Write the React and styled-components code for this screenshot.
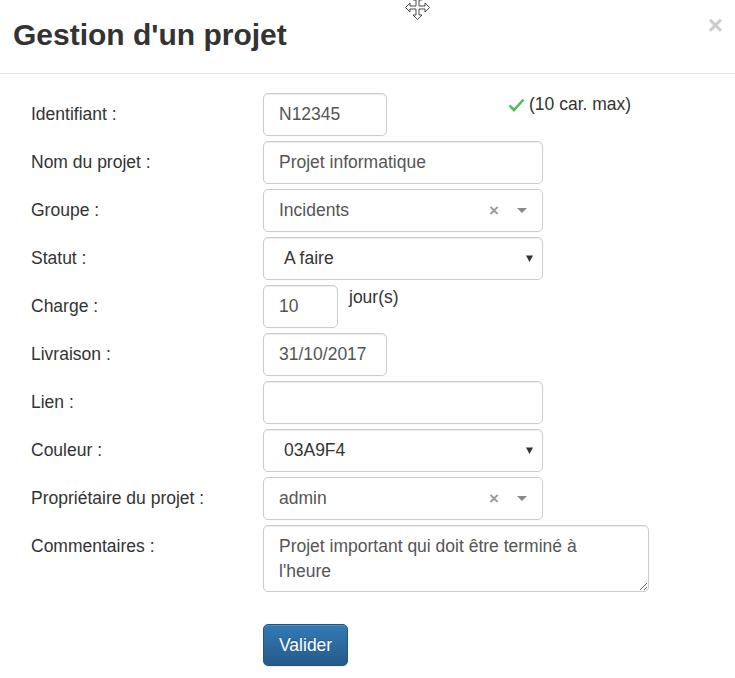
import styled, { createGlobalStyle } from "styled-components";

const GlobalStyle = createGlobalStyle`
  html, body {
    margin: 0;
    padding: 0;
    background: #fff;
    font-family: "Liberation Sans", Arial, Helvetica, sans-serif;
    color: #333;
  }
  * { box-sizing: border-box; }
`;

const Modal = styled.div`
  position: relative;
  width: 735px;
  min-height: 678px;
  background: #fff;
`;

const Header = styled.div`
  display: flex;
  align-items: flex-start;
  justify-content: space-between;
  padding: 18px 12px 22px 13px;
  border-bottom: 1px solid #e5e5e5;
`;

const Title = styled.h3`
  margin: 0;
  font-size: 30px;
  line-height: 33px;
  font-weight: 700;
  color: #333;
`;

const Close = styled.span`
  font-size: 26px;
  font-weight: 700;
  line-height: 1;
  color: #000;
  opacity: 0.2;
  margin-top: -6px;
  cursor: pointer;
`;

const Body = styled.div`
  padding: 19px 19px 19px 31px;
`;

const Row = styled.div`
  display: grid;
  grid-template-columns: 232px 1fr;
  align-items: start;
  margin-bottom: 5.5px;
`;

const Label = styled.label`
  font-size: 17.5px;
  line-height: 25px;
  padding-top: 8.5px;
  color: #333;
`;

const Field = styled.div`
  display: flex;
  align-items: flex-start;
`;

const TextInput = styled.input`
  width: ${(p) => p.$w}px;
  height: 42.5px;
  padding: 0 15px;
  font-family: inherit;
  font-size: 17.5px;
  color: #555;
  border: 1px solid #ccc;
  border-radius: 5px;
  background: #fff;
  box-shadow: inset 0 1px 1px rgba(0, 0, 0, 0.075);
  outline: none;
`;

const TextArea = styled.textarea`
  width: 386px;
  height: 67px;
  padding: 8px 15px;
  font-family: inherit;
  font-size: 17.5px;
  line-height: 25px;
  color: #555;
  border: 1px solid #ccc;
  border-radius: 5px;
  box-shadow: inset 0 1px 1px rgba(0, 0, 0, 0.075);
  outline: none;
  resize: both;
  display: block;
`;

const SelectBox = styled.div`
  width: 280px;
  height: 42.5px;
  display: flex;
  align-items: center;
  padding: 0 ${(p) => (p.$native ? "9px" : "15px")} 0 ${(p) => (p.$native ? "20px" : "15px")};
  font-size: 17.5px;
  color: #555;
  border: 1px solid #ccc;
  border-radius: 5px;
  background: #fff;
  box-shadow: ${(p) => (p.$native ? "inset 0 1px 1px rgba(0,0,0,0.075)" : "none")};
`;

const SelectText = styled.span`
  flex: 1;
  color: ${(p) => (p.$native ? "#333" : "#555")};
`;

const ClearX = styled.span`
  font-size: 17px;
  font-weight: 700;
  color: #999;
  margin-right: 18px;
  line-height: 1;
`;

const Help = styled.span`
  display: inline-flex;
  align-items: center;
  gap: 4px;
  font-size: 17.5px;
  line-height: 25px;
  color: #333;
  margin-top: ${(p) => p.$top || 0}px;
  margin-left: ${(p) => p.$left}px;
`;

const Actions = styled.div`
  padding-left: 232px;
  margin-top: 32px;
`;

const Button = styled.button`
  font-family: inherit;
  font-size: 17.5px;
  line-height: 25px;
  padding: 7.5px 15px;
  color: #fff;
  border: 1px solid #245580;
  border-radius: 5px;
  background: linear-gradient(to bottom, #337ab7 0%, #265a88 100%);
  box-shadow: inset 0 1px 0 rgba(255, 255, 255, 0.15), 0 1px 1px rgba(0, 0, 0, 0.075);
  text-shadow: 0 -1px 0 rgba(0, 0, 0, 0.2);
  cursor: pointer;
`;

const Cursor = styled.svg`
  position: absolute;
  left: 405px;
  top: -5px;
`;

const Caret = () => (
  <svg width="10" height="5" viewBox="0 0 10 5">
    <path d="M0 0 L10 0 L5 5 Z" fill="#888" />
  </svg>
);

const NativeCaret = () => (
  <svg width="7" height="7" viewBox="0 0 7 7">
    <path d="M0 0.5 L7 0.5 L3.5 7 Z" fill="#333" />
  </svg>
);

const Check = () => (
  <svg width="17" height="14" viewBox="0 0 17 14">
    <path d="M1.5 7.5 L6 12 L15.5 1.5" fill="none" stroke="#5cb85c" strokeWidth="2.6" />
  </svg>
);

const Select2 = ({ value }) => (
  <SelectBox>
    <SelectText>{value}</SelectText>
    <ClearX>×</ClearX>
    <Caret />
  </SelectBox>
);

const NativeSelect = ({ value }) => (
  <SelectBox $native>
    <SelectText $native>{value}</SelectText>
    <NativeCaret />
  </SelectBox>
);

export default function App() {
  return (
    <>
      <GlobalStyle />
      <Modal>
        <Cursor width="25" height="25" viewBox="0 0 25 25">
          <path
            d="M12.5 0.5 L17 5 L14 5 L14 11 L20 11 L20 8 L24.5 12.5 L20 17 L20 14 L14 14 L14 20 L17 20 L12.5 24.5 L8 20 L11 20 L11 14 L5 14 L5 17 L0.5 12.5 L5 8 L5 11 L11 11 L11 5 L8 5 Z"
            fill="#fff"
            stroke="#222"
            strokeWidth="0.8"
          />
        </Cursor>
        <Header>
          <Title>Gestion d'un projet</Title>
          <Close>×</Close>
        </Header>
        <Body>
          <Row>
            <Label>Identifiant :</Label>
            <Field>
              <TextInput $w={124} defaultValue="N12345" />
              <Help $left={121} $top={-1}>
                <Check />
                (10 car. max)
              </Help>
            </Field>
          </Row>
          <Row>
            <Label>Nom du projet :</Label>
            <Field>
              <TextInput $w={280} defaultValue="Projet informatique" />
            </Field>
          </Row>
          <Row>
            <Label>Groupe :</Label>
            <Field>
              <Select2 value="Incidents" />
            </Field>
          </Row>
          <Row>
            <Label>Statut :</Label>
            <Field>
              <NativeSelect value="A faire" />
            </Field>
          </Row>
          <Row>
            <Label>Charge :</Label>
            <Field>
              <TextInput $w={75} defaultValue="10" />
              <Help $left={11} $top={0}>jour(s)</Help>
            </Field>
          </Row>
          <Row>
            <Label>Livraison :</Label>
            <Field>
              <TextInput $w={124} defaultValue="31/10/2017" />
            </Field>
          </Row>
          <Row>
            <Label>Lien :</Label>
            <Field>
              <TextInput $w={280} defaultValue="" />
            </Field>
          </Row>
          <Row>
            <Label>Couleur :</Label>
            <Field>
              <NativeSelect value="03A9F4" />
            </Field>
          </Row>
          <Row>
            <Label>Propriétaire du projet :</Label>
            <Field>
              <Select2 value="admin" />
            </Field>
          </Row>
          <Row>
            <Label>Commentaires :</Label>
            <Field>
              <TextArea defaultValue={"Projet important qui doit être terminé à l'heure"} />
            </Field>
          </Row>
          <Actions>
            <Button>Valider</Button>
          </Actions>
        </Body>
      </Modal>
    </>
  );
}
